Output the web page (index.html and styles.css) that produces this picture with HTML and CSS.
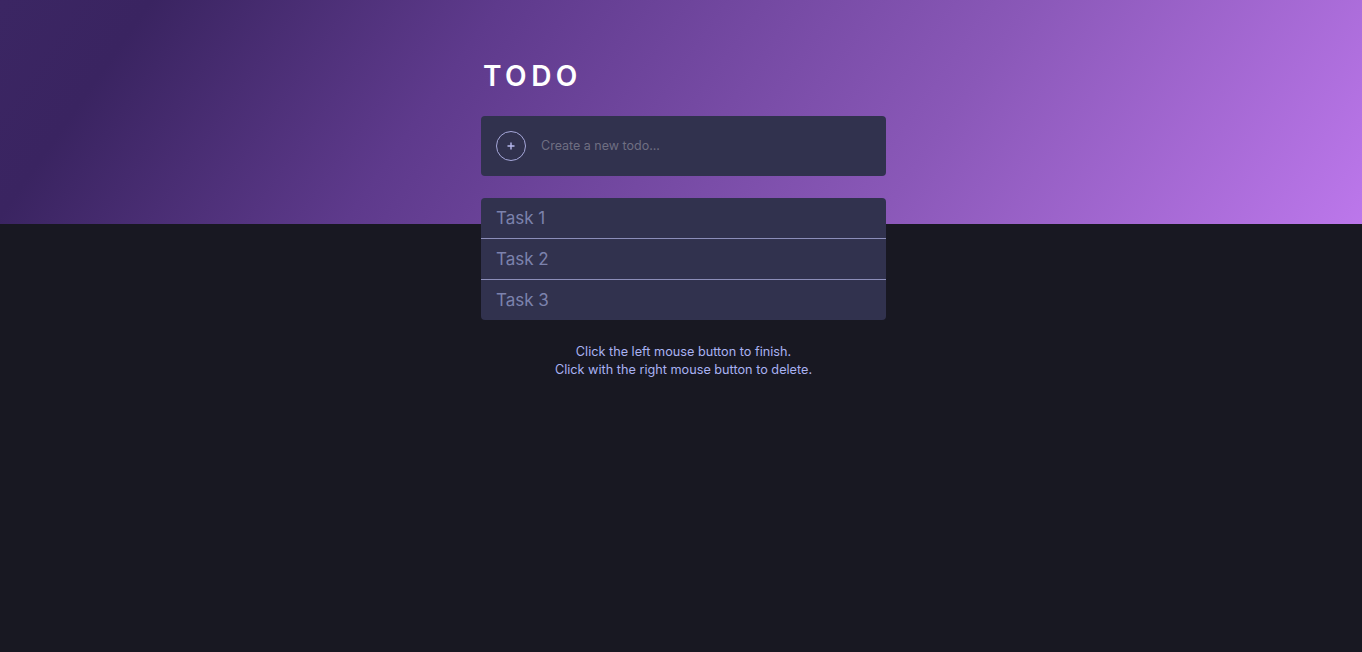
FILE: index.html
```html
<!DOCTYPE html>
<html lang="en">
<head>
<meta charset="utf-8">
<title>Todo</title>
<link rel="stylesheet" href="styles.css">
</head>
<body>
<header class="hero"></header>
<main class="app">
  <h1 class="title">TODO</h1>
  <form class="new-todo">
    <span class="add-btn">
      <svg width="10" height="10" viewBox="0 0 10 10"><path d="M5 1.5v7M1.5 5h7" stroke="#b7b9ee" stroke-width="1.4" fill="none"/></svg>
    </span>
    <input class="new-input" type="text" placeholder="Create a new todo...">
  </form>
  <ul class="todo-list">
    <li class="todo-item">Task 1</li>
    <li class="todo-item">Task 2</li>
    <li class="todo-item">Task 3</li>
  </ul>
  <p class="hint">Click the left mouse button to finish.<br>Click with the right mouse button to delete.</p>
</main>
</body>
</html>
```
FILE: styles.css
```css
* { box-sizing: border-box; }
html, body { margin: 0; padding: 0; }
body {
  background: #181822;
  font-family: "Inter", "Open Sans", sans-serif;
  min-height: 652px;
  position: relative;
}
.hero {
  height: 224px;
  background: linear-gradient(125deg, #3b2663 0%, #3a2461 10%, #5e3a8c 33%, #8a58b8 68%, #bc77eb 100%);
}
.app {
  position: absolute;
  top: 0;
  left: calc(50% - 200px);
  width: 405px;
}
.title {
  margin: 58px 0 0 2px;
  height: 37px;
  font-size: 28px;
  font-weight: 600;
  letter-spacing: 4.5px;
  color: #ffffff;
  line-height: 37px;
}
.new-todo {
  margin-top: 21px;
  height: 60px;
  background: #31324e;
  border-radius: 4px;
  display: flex;
  align-items: center;
  padding-left: 15px;
}
.add-btn {
  width: 30px;
  height: 30px;
  border: 1px solid #a6a8da;
  border-radius: 50%;
  display: flex;
  align-items: center;
  justify-content: center;
  flex: none;
}
.new-input {
  margin-left: 15px;
  flex: 1;
  background: transparent;
  border: none;
  outline: none;
  font-family: inherit;
  font-size: 12.5px;
  color: #c8c8d8;
  padding: 0;
  margin-top: -1px;
}
.new-input::placeholder { color: #6f6f82; }
.todo-list {
  list-style: none;
  margin: 22px 0 0;
  padding: 0;
  background: #31324e;
  border-radius: 4px;
  overflow: hidden;
}
.todo-item {
  height: 41px;
  line-height: 40px;
  padding-left: 15px;
  font-size: 17px;
  color: #7c82ad;
  border-top: 1px solid #8c8eb9;
}
.todo-item:first-child { border-top: none; height: 40px; }
.hint {
  margin: 23px 0 0;
  text-align: center;
  font-size: 12.7px;
  line-height: 18px;
  color: #a9b2f2;
}
```
